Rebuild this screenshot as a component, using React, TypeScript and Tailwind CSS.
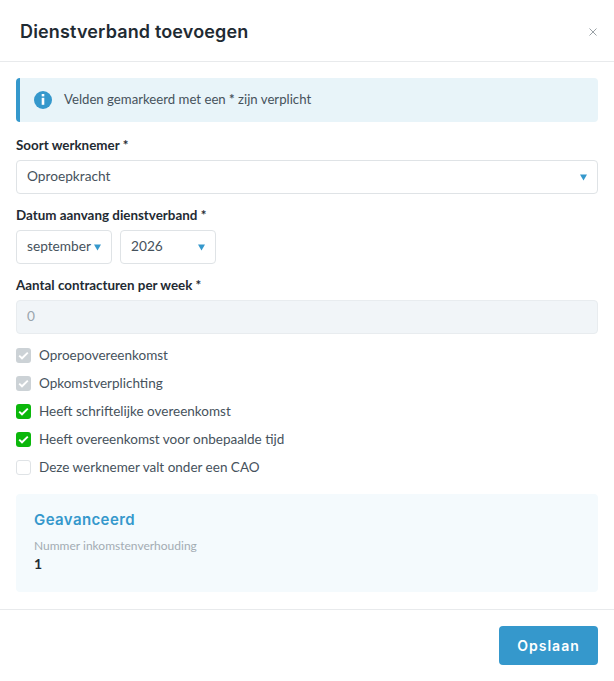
const body = { fontFamily: 'Lato, sans-serif' };
const head = { fontFamily: 'Inter, sans-serif' };

function Caret() {
  return (
    <svg width="7" height="7" viewBox="0 0 7 7" className="shrink-0">
      <path d="M0 .5h7L3.5 6.5z" fill="#3598cc" />
    </svg>
  );
}

function Check({ state, label }: { state: "gray" | "green" | "off"; label: string }) {
  const box =
    state === "gray"
      ? "bg-[#ccd2d6]"
      : state === "green"
        ? "bg-[#0bb70b]"
        : "bg-white border border-[#dfe3e6]";
  return (
    <div className="flex items-center h-4 gap-[8px]">
      <span className={`w-[15px] h-[15px] rounded-[3px] flex items-center justify-center ${box}`}>
        {state !== "off" && (
          <svg width="11" height="9" viewBox="0 0 11 9" fill="none">
            <path d="M1.2 4.6 4 7.3 9.8 1.6" stroke="#fff" strokeWidth="1.9" />
          </svg>
        )}
      </span>
      <span className="text-[13.5px] leading-4 text-[#46525c]">{label}</span>
    </div>
  );
}

export default function App() {
  return (
    <div className="w-[614px] h-[681px] bg-white flex flex-col" style={body}>
      <header className="h-[62px] shrink-0 border-b border-[#e8eaec] flex items-center justify-between pl-5 pr-4 pt-[2px]">
        <h1 className="text-[18px] font-semibold text-[#1f2b33] tracking-[0.15px]" style={head}>
          Dienstverband toevoegen
        </h1>
        <svg width="10" height="10" viewBox="0 0 10 10" fill="none">
          <path d="M1.5 1.5l7 7M8.5 1.5l-7 7" stroke="#9aa1a6" strokeWidth="1" />
        </svg>
      </header>

      <main className="flex-1 px-4 pt-4 flex flex-col">
        <div className="h-11 rounded-[4px] bg-[#e8f4f9] border-l-4 border-[#3598cc] flex items-center pl-[14px] gap-3">
          <span className="w-[18px] h-[18px] mb-[1px] rounded-full bg-[#3598cc] text-white flex items-center justify-center">
            <svg width="4" height="11" viewBox="0 0 4 11" fill="#fff">
              <rect x="0.7" y="0" width="2.6" height="2.4" />
              <rect x="0.7" y="3.8" width="2.6" height="7" />
            </svg>
          </span>
          <span className="text-[13.2px] text-[#46525c]">
            Velden gemarkeerd met een <b className="font-bold">*</b> zijn verplicht
          </span>
        </div>

        <label className="mt-[14px] text-[13.4px] leading-[18px] font-bold text-[#1f2b33]">Soort werknemer *</label>
        <div className="mt-[6px] h-[34px] rounded-[4px] border border-[#dfe3e6] flex items-center justify-between pl-[10px] pr-[10px] text-[13.7px] text-[#46525c]">
          <span className="mb-[2px]">Oproepkracht</span>
          <Caret />
        </div>

        <label className="mt-[12px] text-[13.4px] leading-[18px] font-bold text-[#1f2b33]">Datum aanvang dienstverband *</label>
        <div className="mt-[6px] flex gap-2">
          <div className="w-24 h-[34px] rounded-[4px] border border-[#dfe3e6] flex items-center justify-between pl-[10px] pr-[10px] text-[13.7px] text-[#46525c]">
            <span className="mb-[2px]">september</span>
            <Caret />
          </div>
          <div className="w-24 h-[34px] rounded-[4px] border border-[#dfe3e6] flex items-center justify-between pl-[10px] pr-[10px] text-[13.7px] text-[#46525c]">
            <span className="mb-[2px]">2026</span>
            <Caret />
          </div>
        </div>

        <label className="mt-[12px] text-[13.4px] leading-[18px] font-bold text-[#1f2b33]">Aantal contracturen per week *</label>
        <div className="mt-[6px] h-[34px] rounded-[4px] border border-[#e8ecef] bg-[#f1f5f8] flex items-center pl-[10px] text-[13.7px] text-[#9aa5ad]">
          <span className="mb-[2px]">0</span>
        </div>

        <div className="mt-[13px] flex flex-col gap-3">
          <Check state="gray" label="Oproepovereenkomst" />
          <Check state="gray" label="Opkomstverplichting" />
          <Check state="green" label="Heeft schriftelijke overeenkomst" />
          <Check state="green" label="Heeft overeenkomst voor onbepaalde tijd" />
          <Check state="off" label="Deze werknemer valt onder een CAO" />
        </div>

        <section className="mt-[19px] h-[98px] rounded-[4px] bg-[#f4fafd] px-[18px] pt-4">
          <h2 className="text-[15px] leading-5 font-semibold text-[#3598cc] tracking-[0.4px]" style={head}>Geavanceerd</h2>
          <div className="mt-[8px] text-[12px] leading-4 text-[#a3acb3]">Nummer inkomstenverhouding</div>
          <div className="mt-[2px] text-[14px] leading-4 font-bold text-[#1f2b33]">1</div>
        </section>
      </main>

      <footer className="h-[72px] shrink-0 border-t border-[#e8eaec] flex justify-end items-start pt-4 pr-4">
        <button className="w-[99px] h-[39px] rounded-[4px] bg-[#3598cc] text-white text-[14px] font-semibold tracking-[1px]" style={head}>
          Opslaan
        </button>
      </footer>
    </div>
  );
}
